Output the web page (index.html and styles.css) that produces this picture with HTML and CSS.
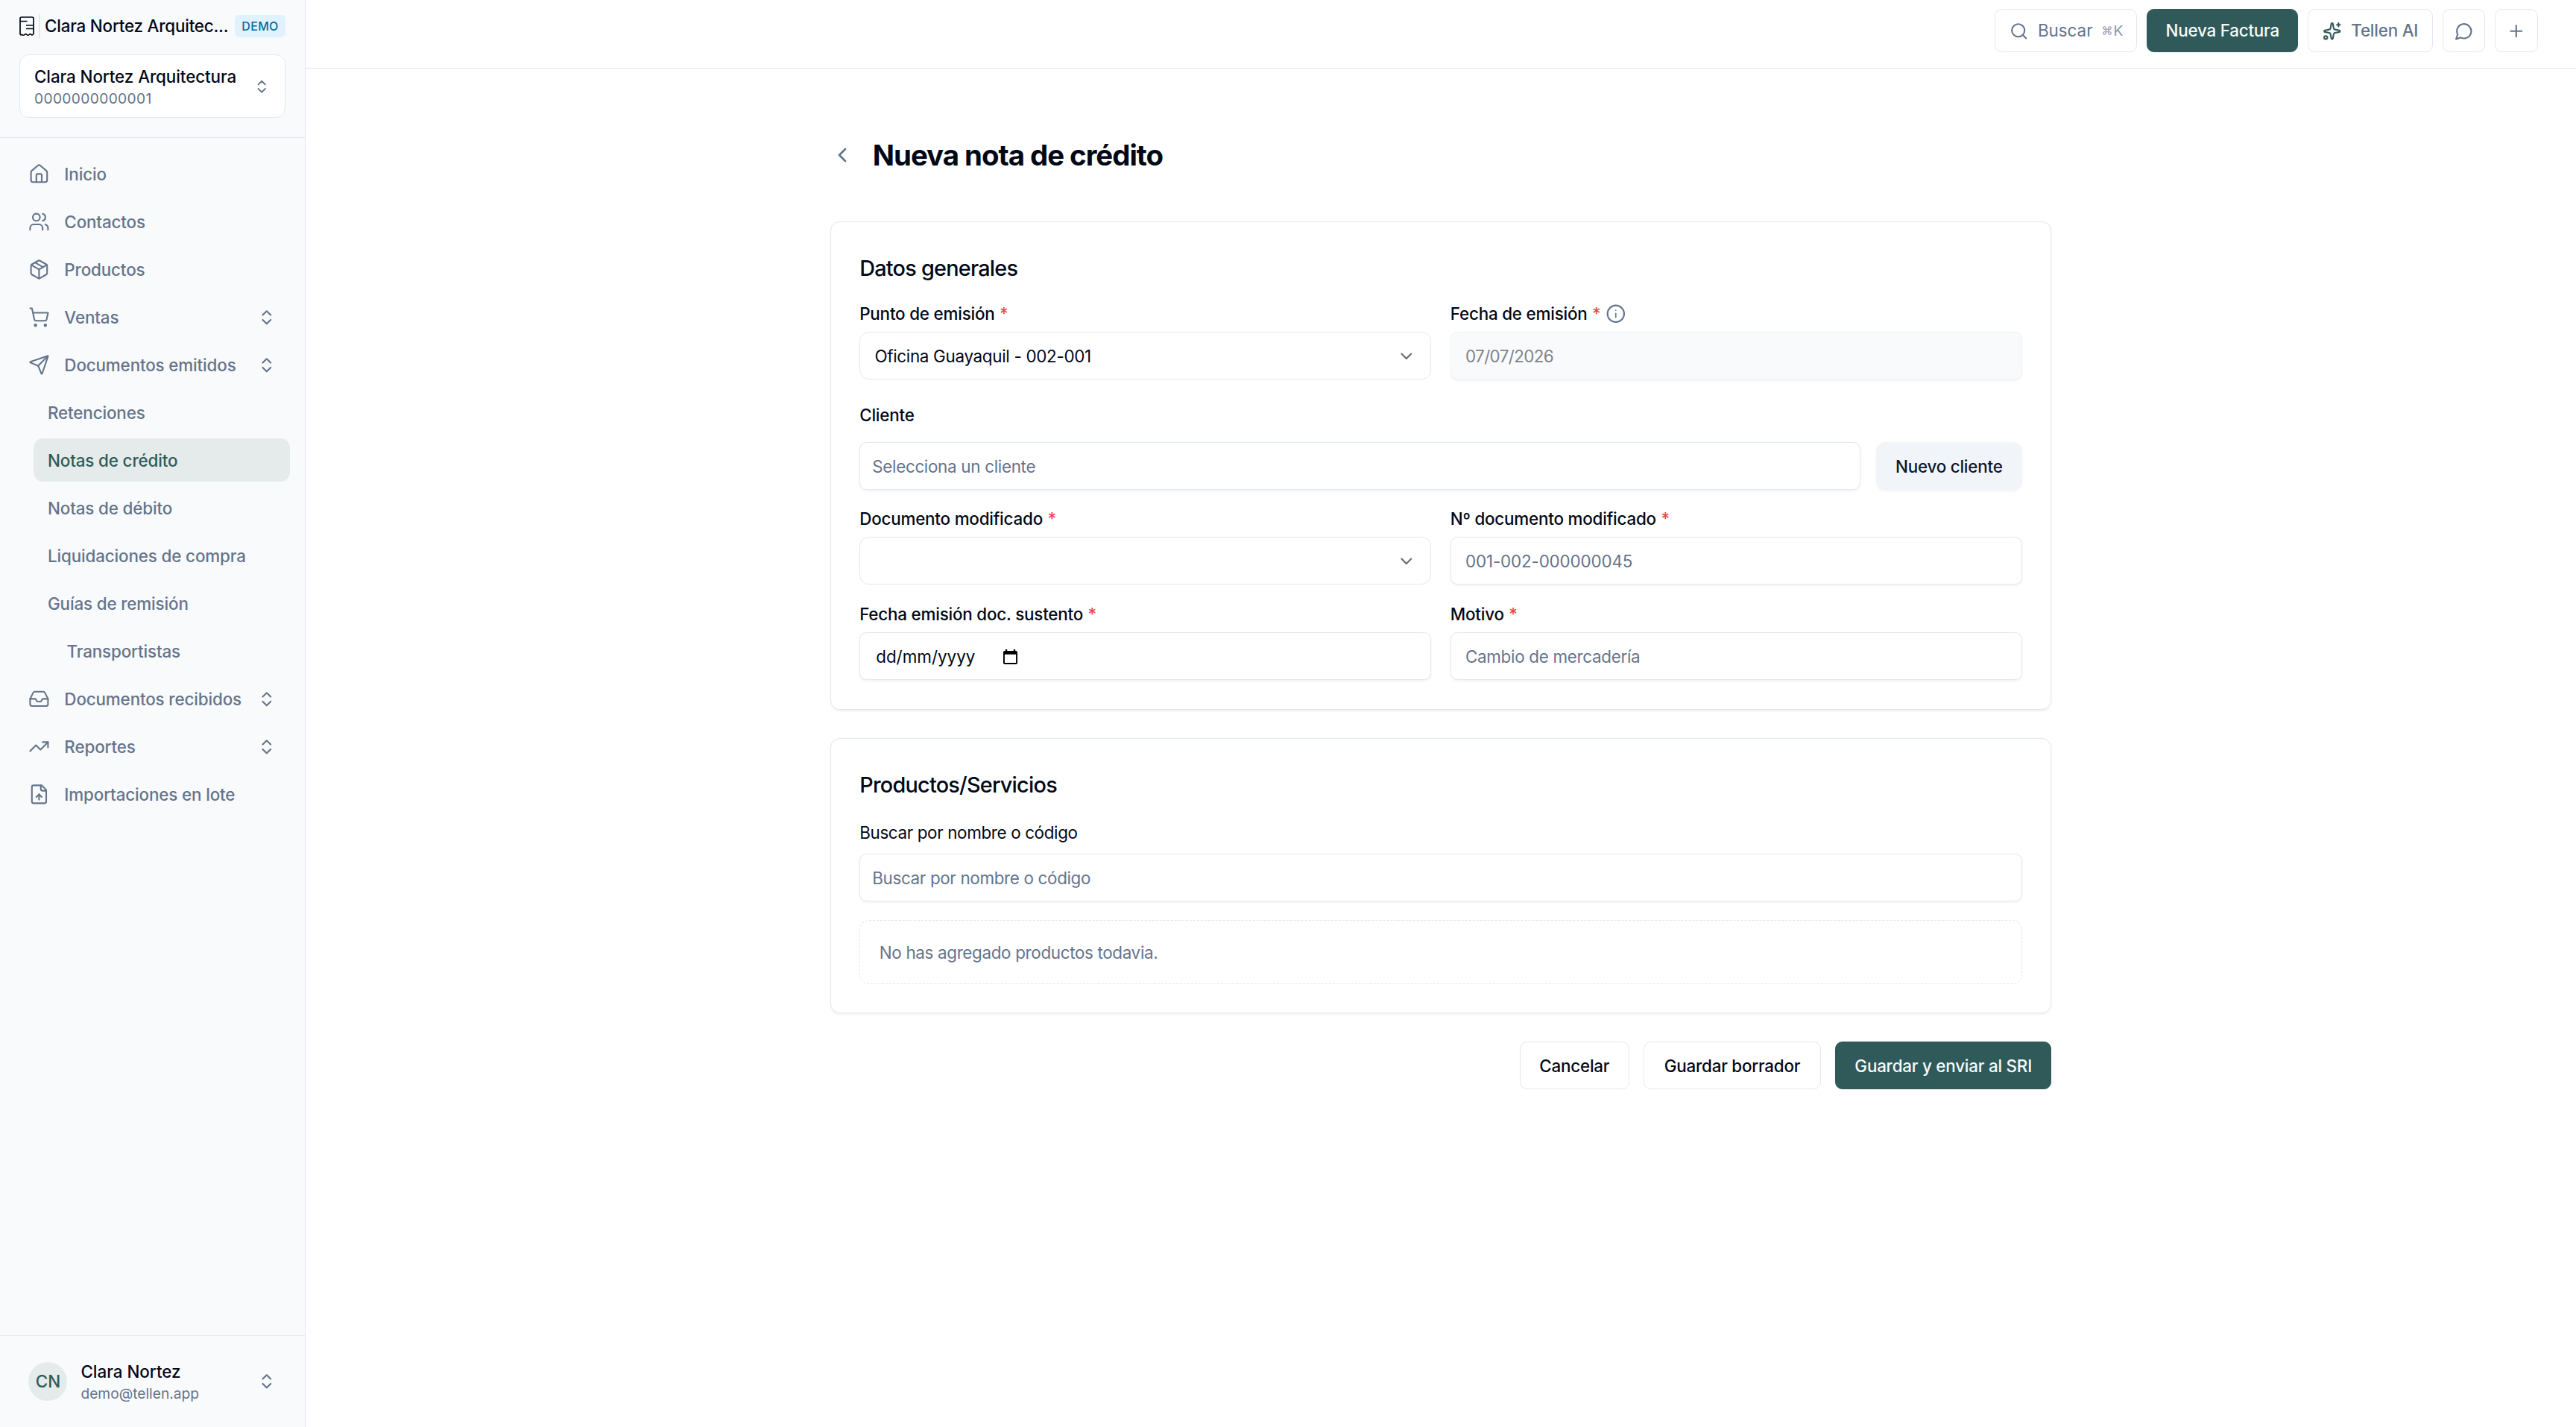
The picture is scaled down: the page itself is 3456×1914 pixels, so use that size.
FILE: index.html
```html
<!DOCTYPE html>
<html lang="es">
<head>
<meta charset="utf-8">
<title>Nueva nota de crédito</title>
<link rel="stylesheet" href="styles.css">
</head>
<body>
<svg class="sprite" aria-hidden="true">
  <symbol id="updown" viewBox="0 0 24 24"><path d="m7 15 5 5 5-5"/><path d="m7 9 5-5 5 5"/></symbol>
  <symbol id="down" viewBox="0 0 24 24"><path d="m6 9 6 6 6-6"/></symbol>
</svg>
<div class="app">
  <aside class="sidebar">
    <div class="brand-area">
      <div class="brand">
        <svg class="logo" viewBox="0 0 20 26"><path d="M1 23.500V3Q1 1 3 1H17Q19 1 19 3V23.500Q17.500 25.500 16 24.500Q14.500 23 13 24.500Q11.500 26 10 24.500Q8.500 23 7 24.500Q5.500 26 4 24.500Q2 25.500 1 23.500Z"/><path d="M1 6.500H10.500M9 12H19M9 16.500H19"/></svg>
        <span class="divider"></span>
        <span class="brand-name">Clara Nortez Arquitec...</span>
        <span class="badge">DEMO</span>
      </div>
      <div class="org">
        <div class="org-text"><span class="org-name">Clara Nortez Arquitectura</span><span class="org-id">0000000000001</span></div>
        <svg class="icon org-chevron"><use href="#updown"/></svg>
      </div>
    </div>
    <nav class="nav">
      <a class="item"><svg class="icon nav-icon" viewBox="0 0 24 24"><path d="M15 21v-8a1 1 0 0 0-1-1h-4a1 1 0 0 0-1 1v8"/><path d="M3 10a2 2 0 0 1 .709-1.528l7-5.999a2 2 0 0 1 2.582 0l7 5.999A2 2 0 0 1 21 10v9a2 2 0 0 1-2 2H5a2 2 0 0 1-2-2z"/></svg><span>Inicio</span></a>
      <a class="item"><svg class="icon nav-icon" viewBox="0 0 24 24"><path d="M16 21v-2a4 4 0 0 0-4-4H6a4 4 0 0 0-4 4v2"/><circle cx="9" cy="7" r="4"/><path d="M22 21v-2a4 4 0 0 0-3-3.870"/><path d="M16 3.130a4 4 0 0 1 0 7.750"/></svg><span>Contactos</span></a>
      <a class="item"><svg class="icon nav-icon" viewBox="0 0 24 24"><path d="m7.500 4.270 9 5.150"/><path d="M21 8a2 2 0 0 0-1-1.730l-7-4a2 2 0 0 0-2 0l-7 4A2 2 0 0 0 3 8v8a2 2 0 0 0 1 1.730l7 4a2 2 0 0 0 2 0l7-4A2 2 0 0 0 21 16Z"/><path d="m3.300 7 8.700 5 8.700-5"/><path d="M12 22V12"/></svg><span>Productos</span></a>
      <a class="item"><svg class="icon nav-icon" viewBox="0 0 24 24"><circle cx="8" cy="21" r="1"/><circle cx="19" cy="21" r="1"/><path d="M2.050 2.050h2l2.660 12.420a2 2 0 0 0 2 1.580h9.780a2 2 0 0 0 1.950-1.570l1.650-7.430H5.120"/></svg><span>Ventas</span><svg class="icon chevron"><use href="#updown"/></svg></a>
      <a class="item"><svg class="icon nav-icon" viewBox="0 0 24 24"><path d="M14.536 21.686a.5.5 0 0 0 .937-.024l6.500-19a.496.496 0 0 0-.635-.635l-19 6.500a.5.5 0 0 0-.024.937l7.930 3.180a2 2 0 0 1 1.112 1.110z"/><path d="m21.854 2.147-10.940 10.939"/></svg><span>Documentos emitidos</span><svg class="icon chevron"><use href="#updown"/></svg></a>
      <a class="item sub">Retenciones</a>
      <a class="item sub active">Notas de crédito</a>
      <a class="item sub">Notas de débito</a>
      <a class="item sub">Liquidaciones de compra</a>
      <a class="item sub">Guías de remisión</a>
      <a class="item sub deep">Transportistas</a>
      <a class="item"><svg class="icon nav-icon" viewBox="0 0 24 24"><path d="M22 12h-6l-2 3h-4l-2-3H2"/><path d="M5.450 5.110 2 12v6a2 2 0 0 0 2 2h16a2 2 0 0 0 2-2v-6l-3.450-6.890A2 2 0 0 0 16.760 4H7.240a2 2 0 0 0-1.790 1.110z"/></svg><span>Documentos recibidos</span><svg class="icon chevron"><use href="#updown"/></svg></a>
      <a class="item"><svg class="icon nav-icon" viewBox="0 0 24 24"><path d="M16 7h6v6"/><path d="m22 7-8.500 8.500-5-5L2 17"/></svg><span>Reportes</span><svg class="icon chevron"><use href="#updown"/></svg></a>
      <a class="item"><svg class="icon nav-icon" viewBox="0 0 24 24"><path d="M15 2H6a2 2 0 0 0-2 2v16a2 2 0 0 0 2 2h12a2 2 0 0 0 2-2V7Z"/><path d="M14 2v4a2 2 0 0 0 2 2h4"/><path d="M12 12v6"/><path d="m15 15-3-3-3 3"/></svg><span>Importaciones en lote</span></a>
    </nav>
    <div class="user">
      <span class="avatar">CN</span>
      <div class="user-text"><span class="user-name">Clara Nortez</span><span class="user-mail">demo@tellen.app</span></div>
      <svg class="icon chevron"><use href="#updown"/></svg>
    </div>
  </aside>
  <div class="page">
    <header class="topbar">
      <button class="btn search"><svg class="icon" viewBox="0 0 24 24"><circle cx="11" cy="11" r="8"/><path d="m21 21-4.300-4.300"/></svg><span>Buscar</span><kbd><svg class="icon cmd" viewBox="0 0 24 24"><path d="M15 6v12a3 3 0 1 0 3-3H6a3 3 0 1 0 3 3V6a3 3 0 1 0-3 3h12a3 3 0 1 0-3-3"/></svg>K</kbd></button>
      <button class="btn primary invoice">Nueva Factura</button>
      <button class="btn ai"><svg class="icon" viewBox="0 0 24 24"><path d="M11.017 2.814a1 1 0 0 1 1.966 0l1.051 5.558a2 2 0 0 0 1.594 1.594l5.558 1.051a1 1 0 0 1 0 1.966l-5.558 1.051a2 2 0 0 0-1.594 1.594l-1.051 5.558a1 1 0 0 1-1.966 0l-1.051-5.558a2 2 0 0 0-1.594-1.594l-5.558-1.051a1 1 0 0 1 0-1.966l5.558-1.051a2 2 0 0 0 1.594-1.594z"/><path d="M20 2v4"/><path d="M22 4h-4"/><circle cx="4" cy="20" r="2"/></svg><span>Tellen AI</span></button>
      <button class="btn square"><svg class="icon" viewBox="0 0 24 24"><path d="M7.900 20A9 9 0 1 0 4 16.100L2 22Z"/></svg></button>
      <button class="btn square"><svg class="icon" viewBox="0 0 24 24"><path d="M5 12h14"/><path d="M12 5v14"/></svg></button>
    </header>
    <main class="content">
      <div class="title-row"><svg class="icon back" viewBox="0 0 24 24"><path d="m15 18-6-6 6-6"/></svg><h1>Nueva nota de crédito</h1></div>
      <section class="card general">
        <h2>Datos generales</h2>
        <div class="grid">
          <div class="field"><label>Punto de emisión <i>*</i></label><div class="control select"><span>Oficina Guayaquil - 002-001</span><svg class="icon"><use href="#down"/></svg></div></div>
          <div class="field"><label>Fecha de emisión <i>*</i><svg class="icon info" viewBox="0 0 24 24"><circle cx="12" cy="12" r="10.500"/><path class="thin" d="M12 16.500v-5M12 7.600v.2"/></svg></label><div class="control disabled">07/07/2026</div></div>
        </div>
        <div class="client">
          <label>Cliente</label>
          <div class="client-row"><div class="control snug muted">Selecciona un cliente</div><button class="btn secondary">Nuevo cliente</button></div>
        </div>
        <div class="grid">
          <div class="field"><label>Documento modificado <i>*</i></label><div class="control select"><span></span><svg class="icon"><use href="#down"/></svg></div></div>
          <div class="field"><label>Nº documento modificado <i>*</i></label><div class="control muted digits">001-002-000000045</div></div>
          <div class="field"><label>Fecha emisión doc. sustento <i>*</i></label><div class="control date"><span>dd/mm/yyyy</span><svg class="calendar" viewBox="0 0 20 21"><path fill-rule="evenodd" d="M3 0h2.500v2h9V0H17v2h1q2 0 2 2v15q0 2-2 2H2q-2 0-2-2V4Q0 2 2 2h1zM2 7v12h16V7z"/></svg></div></div>
          <div class="field"><label>Motivo <i>*</i></label><div class="control muted">Cambio de mercadería</div></div>
        </div>
      </section>
      <section class="card products">
        <h2>Productos/Servicios</h2>
        <label class="regular">Buscar por nombre o código</label>
        <div class="control snug muted">Buscar por nombre o código</div>
        <div class="empty">No has agregado productos todavia.</div>
      </section>
      <div class="actions">
        <button class="btn cancel">Cancelar</button>
        <button class="btn draft">Guardar borrador</button>
        <button class="btn primary send">Guardar y enviar al SRI</button>
      </div>
    </main>
  </div>
</div>
</body>
</html>
```
FILE: styles.css
```css
:root { --ink: #020817; --muted: #64748b; --line: #e2e8f0; --brand: #2f5a59; --tint: #e5ebea; font-size: 25.6px; }
* { box-sizing: border-box; }
body { margin: 0; color: var(--ink); background: #fff; font: 400 22.4px/32px Inter, "Liberation Sans", sans-serif; letter-spacing: -.3px; }
.sprite { display: none; }
.icon { width: 1rem; height: 1rem; flex: none; fill: none; stroke: currentColor; stroke-width: 2; stroke-linecap: round; stroke-linejoin: round; }
.app { display: flex; height: 1914px; }

.sidebar { width: 410px; flex: none; display: flex; flex-direction: column; background: #f9fafc; border-right: 1px solid var(--line); font-weight: 500; letter-spacing: -.14px; }
.brand-area { height: 185px; padding: 19px 26px 0; border-bottom: 1px solid var(--line); }
.brand { display: flex; align-items: center; height: 32px; white-space: nowrap; }
.logo { width: 20px; height: 26px; fill: none; stroke: var(--ink); stroke-width: 1.7; flex: none; }
.divider { width: 2px; height: 32px; margin: 0 6px 0 6px; background: var(--line); }
.brand-name { width: 247px; letter-spacing: -.2px; }
.badge { width: 68px; height: 30px; margin-left: auto; border-radius: 6px; background: #e0f2fe; color: #0369a1; font-size: 16px; line-height: 30px; text-align: center; letter-spacing: .3px; }
.org { display: flex; align-items: center; justify-content: space-between; height: 85px; margin-top: 22px; padding: 2px 20px 0 19px; background: #fff; border: 1px solid var(--line); border-radius: 12.8px; white-space: nowrap; }
.org-text, .user-text { display: flex; flex-direction: column; }
.org-name { line-height: 30px; letter-spacing: -.08px; }
.org-id { color: var(--muted); font-size: 19.2px; font-weight: 400; line-height: 28px; letter-spacing: .35px; }
.org-chevron { width: 22.4px; height: 22.4px; color: var(--muted); }
.nav { flex: 1; display: flex; flex-direction: column; gap: 6.4px; padding: 19.5px 20px 19.2px 19.2px; }
.item { display: flex; align-items: center; gap: 19.2px; height: 57.6px; padding: 1px 18.400px 0 19.2px; border-radius: 12.8px; color: var(--muted); white-space: nowrap; }
.nav-icon { width: 28.8px; height: 28.8px; stroke-width: 1.75; }
.chevron { margin-left: auto; color: var(--muted); }
.sub { margin-left: 25.6px; }
.deep { padding-left: 44.8px; }
.active { background: var(--tint); color: var(--brand); }
.user { display: flex; align-items: center; height: 123px; padding: 0 38.4px; border-top: 1px solid var(--line); }
.avatar { width: 52px; height: 52px; margin-right: 18px; border-radius: 50%; background: var(--tint); color: var(--brand); line-height: 52px; text-align: center; }
.user-name { line-height: 32px; letter-spacing: 0; }
.user-mail { color: var(--muted); font-size: 19.2px; font-weight: 400; line-height: 27px; letter-spacing: 0; }

.page { flex: 1; min-width: 0; }
.topbar { display: flex; justify-content: flex-end; gap: 12.8px; height: 92px; padding: 12px 51.2px 0; border-bottom: 1px solid var(--line); }
.btn { display: flex; align-items: center; justify-content: center; height: 64px; padding: 1px 0 0; border: 1px solid var(--line); border-radius: 9.6px; background: #fff; color: var(--ink); font: inherit; font-weight: 500; letter-spacing: -.22px; white-space: nowrap; }
.topbar .btn { height: 57.6px; color: var(--muted); }
.btn.primary, .topbar .btn.primary { background: var(--brand); border-color: var(--brand); color: #f8fafc; }
.topbar .search { width: 191px; gap: 12.8px; font-weight: 400; letter-spacing: 0; }
.search kbd { display: flex; align-items: center; font: inherit; font-size: 19.2px; opacity: .75; }
.cmd { width: 14px; height: 14px; margin-right: 1px; }
.invoice { width: 203px; }
.ai { width: 168px; gap: 12.8px; }
.ai .icon { color: var(--brand); }
.square { width: 57.6px; }

.content { width: 1638.4px; margin: 0 auto; padding-top: 84px; }
.title-row { display: flex; align-items: center; height: 64px; }
.back { width: 32px; height: 32px; margin-right: 25px; color: var(--muted); }
h1 { margin: 0; font-size: 38.4px; font-weight: 700; letter-spacing: -1.02px; }
h2 { margin: 0; font-size: 28.8px; font-weight: 500; line-height: 32px; letter-spacing: -.75px; }
.card { padding: 0 38.4px; border: 1px solid var(--line); border-radius: 12.8px; background: #fff; box-shadow: 0 1.6px 3.2px rgba(0,0,0,.06); }
.general { height: 655px; margin-top: 57px; padding-top: 46px; }
.grid { display: grid; grid-template-columns: 1fr 1fr; gap: 25.6px; }
h2 + .grid { margin-top: 28px; }
.field { height: 102.4px; }
label { display: flex; align-items: center; height: 32px; gap: 6.500px; padding-top: 1px; font-weight: 500; letter-spacing: -.2px; }
label i { color: #ef4444; font-style: normal; }
label.regular { font-weight: 400; letter-spacing: -.35px; margin: 31px 0 13px; }
.info { color: var(--muted); margin-left: 1px; }
.thin { stroke-width: 1.500; }
.control { display: flex; align-items: center; height: 64px; padding: 1px 19.2px 0; border: 1px solid var(--line); border-radius: 9.6px; box-shadow: 0 1.6px 3.2px rgba(0,0,0,.05); background: #fff; }
.field .control { margin-top: 9px; }
.select { justify-content: space-between; border-radius: 12.8px; box-shadow: none; }
.select .icon { opacity: .6; }
.field .disabled { padding-top: 2px; background: #f9fafc; color: #80838b; border-color: #f0f3f7; letter-spacing: -.6px; }
.snug { padding: 1px 16px 0; }
.muted { color: var(--muted); }
.digits { letter-spacing: -.15px; }
.client { margin-top: 34px; }
.client-row { display: flex; gap: 21px; margin: 21px 0 22px; }
.client-row .control { flex: 1; }
.secondary { width: 196px; border: 0; border-radius: 12.8px; background: #f1f5f9; color: #0f172a; box-shadow: 0 1.6px 3.2px rgba(0,0,0,.05); }
.date { gap: 38px; padding-left: 21px; letter-spacing: 0; }
.calendar { width: 19px; height: 20px; fill: #000; }
.products { height: 369px; margin-top: 38.4px; padding-top: 46px; }
.products .control, .empty { letter-spacing: -.33px; }
.empty { display: flex; align-items: center; height: 86px; margin-top: 25px; padding: 1px 25.6px 0; border: 1px dashed var(--line); border-radius: 12.8px; color: var(--muted); }
.actions { display: flex; justify-content: flex-end; gap: 19.2px; margin-top: 38px; }
.cancel { width: 147px; }
.draft { width: 238px; }
.send { width: 290px; }
```
